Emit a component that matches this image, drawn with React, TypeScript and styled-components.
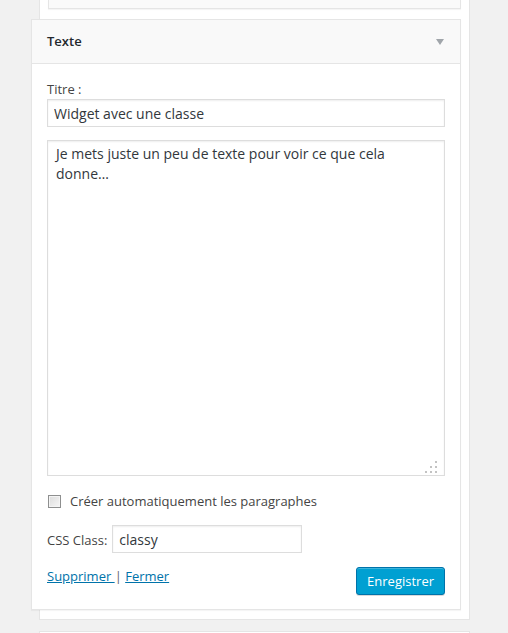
import { createGlobalStyle } from "styled-components";
import styled from "styled-components";

const GlobalStyle = createGlobalStyle`
  html, body {
    margin: 0;
    padding: 0;
    background: #f1f1f1;
  }
  body {
    font-family: "Open Sans", "Liberation Sans", sans-serif;
    color: #444;
    font-size: 13px;
  }
`;

const Page = styled.div`
  width: 508px;
  height: 633px;
  overflow: hidden;
`;

const Sidebar = styled.div`
  box-sizing: border-box;
  width: 431px;
  margin-left: 39px;
  background: #fff;
  border: 1px solid #e5e5e5;
  border-top: none;
  padding: 0 8px 9px 8px;
`;

const NextSidebar = styled(Sidebar)`
  margin-top: 11px;
  height: 20px;
  border-top: 1px solid #e5e5e5;
`;

const PrevWidget = styled.div`
  height: 8px;
  background: #fafafa;
  border: 1px solid #e5e5e5;
  border-top: none;
  box-shadow: 0 1px 1px rgba(0, 0, 0, 0.04);
`;

const Widget = styled.div`
  box-sizing: border-box;
  width: 430px;
  margin-left: -17px;
  margin-top: 10px;
  background: #fff;
  border: 1px solid #e5e5e5;
  box-shadow: 0 1px 1px rgba(0, 0, 0, 0.04);
`;

const Header = styled.div`
  height: 43px;
  display: flex;
  align-items: center;
  justify-content: space-between;
  padding: 0 16px 0 15px;
  background: #f9f9f9;
  border-bottom: 1px solid #e5e5e5;
`;

const Title = styled.h3`
  margin: -2px 0 0;
  font-size: 13px;
  font-weight: 600;
  color: #23282d;
`;

const Arrow = styled.span`
  width: 0;
  height: 0;
  border-left: 4px solid transparent;
  border-right: 4px solid transparent;
  border-top: 6px solid #a0a5aa;
  margin-top: 0;
`;

const Body = styled.div`
  padding: 16px 15px 14px;
`;

const Label = styled.label`
  display: block;
  line-height: 18px;
  color: #444;
`;

const TextInput = styled.input<{ w?: number }>`
  box-sizing: border-box;
  display: block;
  width: ${(p) => (p.w ? `${p.w}px` : "100%")};
  height: 28px;
  margin: 1px 0 0;
  padding: 0 6px;
  border: 1px solid #ddd;
  box-shadow: inset 0 1px 2px rgba(0, 0, 0, 0.07);
  font-family: "Open Sans", "Liberation Sans", sans-serif;
  font-size: 14px;
  color: #32373c;
  background: #fff;
  outline: none;
`;

const AreaWrap = styled.div`
  position: relative;
  margin-top: 13px;
`;

const TextArea = styled.textarea`
  box-sizing: border-box;
  display: block;
  width: 100%;
  height: 336px;
  padding: 3px 8px;
  border: 1px solid #ddd;
  box-shadow: inset 0 1px 2px rgba(0, 0, 0, 0.07);
  font-family: "Open Sans", "Liberation Sans", sans-serif;
  font-size: 14px;
  line-height: 19.6px;
  color: #32373c;
  resize: none;
  outline: none;
`;

const Grip = styled.svg`
  position: absolute;
  right: 8px;
  bottom: 3px;
`;

const CheckRow = styled.div`
  display: flex;
  align-items: center;
  height: 18px;
  margin-top: 16px;
  padding-left: 1px;
`;

const Check = styled.span`
  box-sizing: border-box;
  width: 13px;
  height: 13px;
  border: 1px solid #8e8f8f;
  background: linear-gradient(135deg, #dcdcdc, #f6f6f6);
  box-shadow: inset 0 0 0 1px #f4f4f4;
  margin-right: 9px;
`;

const ClassRow = styled.div`
  display: flex;
  align-items: center;
  gap: 5px;
  margin-top: 14px;
`;

const ClassLabel = styled.span`
  padding-top: 3px;
`;

const Footer = styled.div`
  display: flex;
  justify-content: space-between;
  align-items: flex-start;
  margin-top: 14px;
`;

const Links = styled.div`
  line-height: 18px;
  color: #666;
`;

const Link = styled.a`
  color: #0073aa;
  text-decoration: underline;
  cursor: pointer;
`;

const Button = styled.button`
  box-sizing: border-box;
  height: 28px;
  padding: 0 10px 1px;
  font-family: "Open Sans", "Liberation Sans", sans-serif;
  font-size: 13px;
  line-height: 26px;
  color: #fff;
  background: #00a0d2;
  border: 1px solid #0073aa;
  border-radius: 3px;
  box-shadow: inset 0 1px 0 rgba(120, 200, 230, 0.5), 0 1px 0 rgba(0, 0, 0, 0.15);
  cursor: pointer;
`;

export default function App() {
  return (
    <Page>
      <GlobalStyle />
      <Sidebar>
        <PrevWidget />
        <Widget>
          <Header>
            <Title>Texte</Title>
            <Arrow />
          </Header>
          <Body>
            <Label>Titre :</Label>
            <TextInput defaultValue="Widget avec une classe" />
            <AreaWrap>
              <TextArea
                defaultValue={"Je mets juste un peu de texte pour voir ce que cela\ndonne…"}
              />
              <Grip width="12" height="12" viewBox="0 0 12 12">
                <g fill="#c3c3c3">
                  <rect x="10" y="0" width="2" height="2" />
                  <rect x="5" y="5" width="2" height="2" />
                  <rect x="10" y="5" width="2" height="2" />
                  <rect x="0" y="10" width="2" height="2" />
                  <rect x="5" y="10" width="2" height="2" />
                  <rect x="10" y="10" width="2" height="2" />
                </g>
              </Grip>
            </AreaWrap>
            <CheckRow>
              <Check />
              <span>Créer automatiquement les paragraphes</span>
            </CheckRow>
            <ClassRow>
              <ClassLabel>CSS Class:</ClassLabel>
              <TextInput w={190} defaultValue="classy" />
            </ClassRow>
            <Footer>
              <Links>
                <Link>Supprimer </Link> | <Link>Fermer</Link>
              </Links>
              <Button>Enregistrer</Button>
            </Footer>
          </Body>
        </Widget>
      </Sidebar>
      <NextSidebar />
    </Page>
  );
}
